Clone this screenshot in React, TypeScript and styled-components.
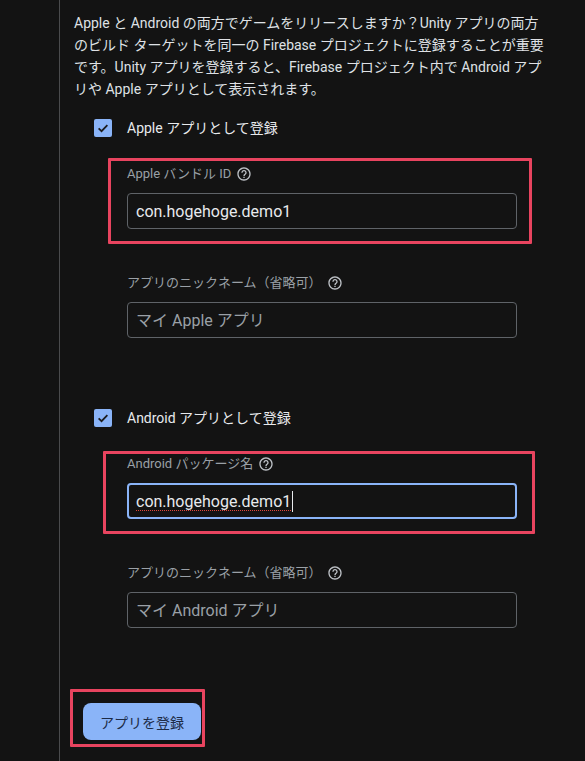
import React from "react";
import styled, { createGlobalStyle } from "styled-components";

const GlobalStyle = createGlobalStyle`
  html, body {
    margin: 0;
    padding: 0;
    background: #131313;
  }
  body {
    font-family: Roboto, "Noto Sans CJK JP", "Noto Sans", sans-serif;
    color: #e3e3e3;
    -webkit-font-smoothing: antialiased;
  }
  * { box-sizing: border-box; }
`;

const Page = styled.div`
  display: flex;
  min-height: 761px;
  background: #131313;
`;

const Gutter = styled.div`
  width: 59px;
  flex: none;
`;

const Main = styled.main`
  flex: 1;
  border-left: 1px solid #4a4b4d;
  padding: 12px 0 0 14px;
  display: flex;
  flex-direction: column;
  align-items: flex-start;
`;

const Intro = styled.p`
  margin: 0;
  width: 500px;
  font-size: 14px;
  line-height: 22px;
  color: #dfe1e5;
`;

const Section = styled.section<{ $top: number }>`
  margin-top: ${(p) => p.$top}px;
  padding-left: 20px;
`;

const CheckRow = styled.label`
  display: flex;
  align-items: center;
  gap: 15px;
  font-size: 14px;
  line-height: 18px;
  color: #e8eaed;
`;

const CheckBox = styled.span`
  width: 18px;
  height: 18px;
  border-radius: 2px;
  background: #8ab4f8;
  display: flex;
  align-items: center;
  justify-content: center;
  flex: none;
`;

const Fields = styled.div`
  margin-top: 29px;
  padding-left: 33px;
  display: flex;
  flex-direction: column;
  align-items: flex-start;
  gap: 46px;
`;

const Field = styled.div`
  display: flex;
  flex-direction: column;
  gap: 11px;
  width: 390px;
`;

const Highlight = styled.div<{ $t: number; $l: number; $r: number; $b: number }>`
  position: relative;
  width: fit-content;
  &::after {
    content: "";
    position: absolute;
    top: ${(p) => -p.$t}px;
    left: ${(p) => -p.$l}px;
    right: ${(p) => -p.$r}px;
    bottom: ${(p) => -p.$b}px;
    border: 3px solid #e8445f;
    border-radius: 1px;
    pointer-events: none;
  }
`;

const Label = styled.div`
  display: flex;
  align-items: center;
  gap: 5px;
  font-size: 13px;
  line-height: 16px;
  color: #9aa0a6;
`;

const HelpIcon = styled.svg`
  width: 16px;
  height: 16px;
  fill: #bdc1c6;
  flex: none;
`;

const TextInput = styled.input`
  width: 390px;
  height: 36px;
  border: 1px solid #5f6368;
  border-radius: 4px;
  background: transparent;
  padding: 0 8px;
  font-family: Roboto, "Noto Sans CJK JP", sans-serif;
  font-size: 16px;
  color: #e8eaed;
  outline: none;
  &::placeholder {
    color: #9aa0a6;
  }
`;

const FocusedInput = styled.div`
  width: 390px;
  height: 36px;
  border: 2px solid #8ab4f8;
  border-radius: 4px;
  padding: 0 7px;
  display: flex;
  align-items: center;
  font-size: 16px;
  color: #e8eaed;
`;

const Misspelled = styled.span`
  text-decoration: underline dotted #e2463b;
  text-decoration-thickness: 1px;
  text-underline-offset: 3px;
  text-decoration-skip-ink: none;
`;

const Caret = styled.span`
  width: 1px;
  height: 21px;
  background: #e8eaed;
  margin-left: 1px;
`;

const ButtonWrap = styled.div`
  margin-top: 75px;
  margin-left: 9px;
  display: flex;
`;

const PrimaryButton = styled.button`
  height: 37px;
  padding: 0 17px;
  border: none;
  border-radius: 8px;
  background: #8ab4f8;
  color: #1c2a45;
  font-family: Roboto, "Noto Sans CJK JP", sans-serif;
  font-size: 14px;
  cursor: pointer;
  display: block;
`;

const Help = () => (
  <HelpIcon viewBox="0 0 24 24" aria-hidden="true">
    <path d="M11 18h2v-2h-2v2zm1-16C6.48 2 2 6.48 2 12s4.48 10 10 10 10-4.48 10-10S17.52 2 12 2zm0 18c-4.41 0-8-3.59-8-8s3.59-8 8-8 8 3.59 8 8-3.59 8-8 8zm0-14c-2.21 0-4 1.79-4 4h2c0-1.1.9-2 2-2s2 .9 2 2c0 2-3 1.75-3 5h2c0-2.25 3-2.5 3-5 0-2.21-1.79-4-4-4z" />
  </HelpIcon>
);

const Check = () => (
  <CheckBox>
    <svg width="14" height="14" viewBox="0 0 24 24" aria-hidden="true">
      <path d="M4.5 12.5l5 5 10-10.5" fill="none" stroke="#1b1c1f" strokeWidth="3" />
    </svg>
  </CheckBox>
);

export default function App() {
  return (
    <>
      <GlobalStyle />
      <Page>
        <Gutter />
        <Main>
          <Intro>
            Apple と Android の両方でゲームをリリースしますか？Unity アプリの両方
            <br />
            のビルド ターゲットを同一の Firebase プロジェクトに登録することが重要
            <br />
            です。Unity アプリを登録すると、Firebase プロジェクト内で Android アプ
            <br />
            リや Apple アプリとして表示されます。
          </Intro>

          <Section $top={19}>
            <CheckRow>
              <Check />
              Apple アプリとして登録
            </CheckRow>
            <Fields>
              <Highlight $t={8} $l={19} $r={15} $b={15}>
                <Field>
                  <Label>
                    Apple バンドル ID <Help />
                  </Label>
                  <TextInput readOnly value="con.hogehoge.demo1" />
                </Field>
              </Highlight>
              <Field>
                <Label>
                  アプリのニックネーム（省略可） <Help />
                </Label>
                <TextInput readOnly placeholder="マイ Apple アプリ" />
              </Field>
            </Fields>
          </Section>

          <Section $top={71}>
            <CheckRow>
              <Check />
              Android アプリとして登録
            </CheckRow>
            <Fields>
              <Highlight $t={5} $l={24} $r={18} $b={15}>
                <Field>
                  <Label>
                    Android パッケージ名 <Help />
                  </Label>
                  <FocusedInput>
                    <Misspelled>con.hogehoge.demo1</Misspelled>
                    <Caret />
                  </FocusedInput>
                </Field>
              </Highlight>
              <Field>
                <Label>
                  アプリのニックネーム（省略可） <Help />
                </Label>
                <TextInput readOnly placeholder="マイ Android アプリ" />
              </Field>
            </Fields>
          </Section>

          <ButtonWrap>
            <Highlight $t={14} $l={13} $r={4} $b={7}>
              <PrimaryButton>アプリを登録</PrimaryButton>
            </Highlight>
          </ButtonWrap>
        </Main>
      </Page>
    </>
  );
}
